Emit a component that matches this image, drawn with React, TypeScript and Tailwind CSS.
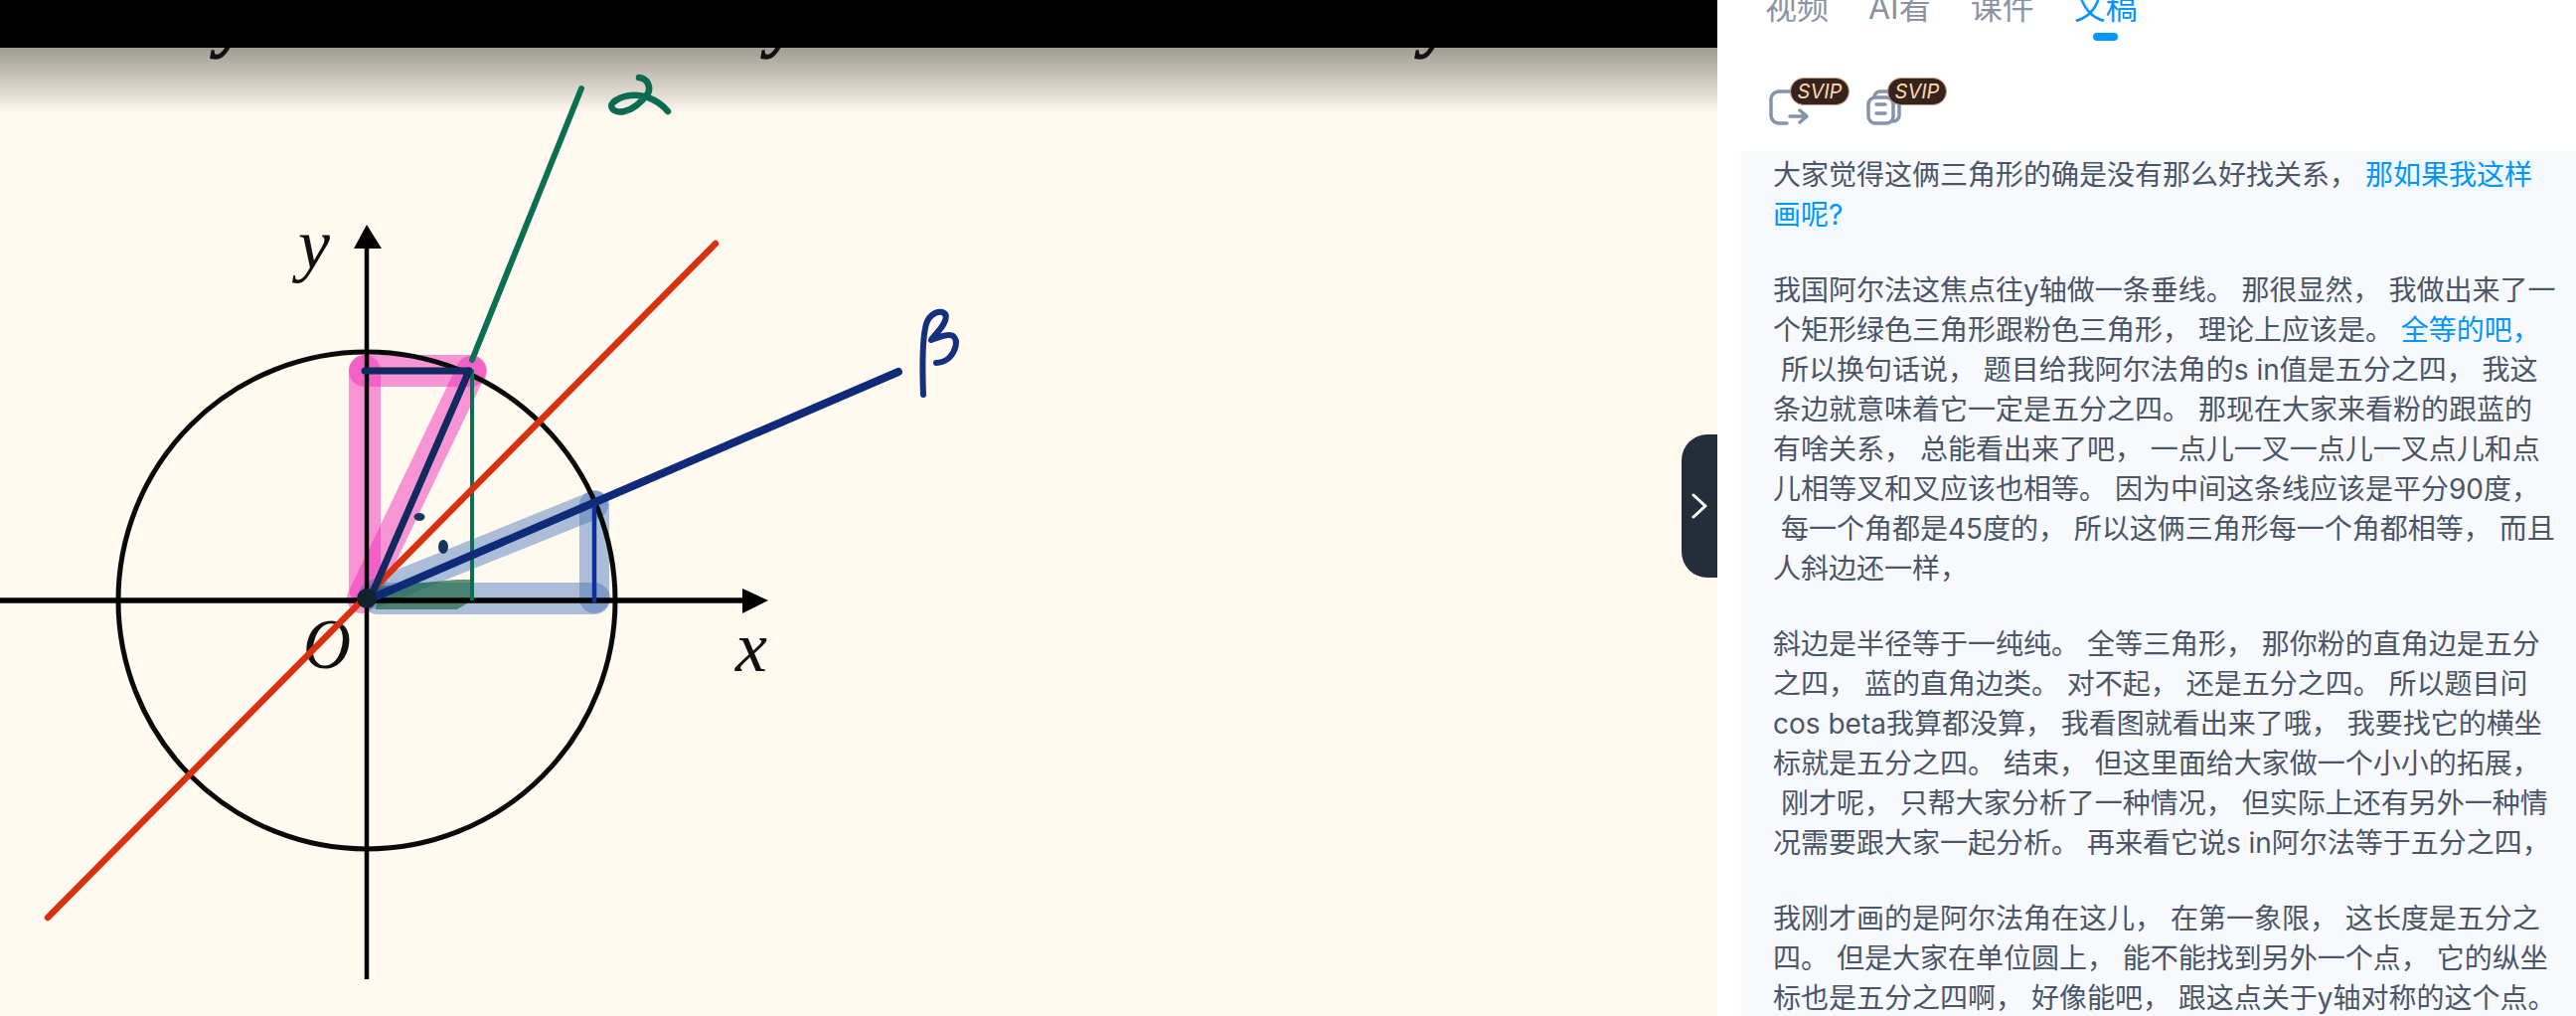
import React from "react";

const font = { fontFamily: 'Inter, "Noto Sans CJK SC", sans-serif' };

function B({ children }: { children: React.ReactNode }) {
  return <span className="bg-[#f2f8ff] text-[#0095ff]">{children}</span>;
}

const paragraphs: React.ReactNode[][] = [
  [
    <>大家觉得这俩三角形的确是没有那么好找关系， <B>那如果我这样</B></>,
    <B>画呢?</B>,
  ],
  [
    "我国阿尔法这焦点往y轴做一条垂线。 那很显然， 我做出来了一",
    <>个矩形绿色三角形跟粉色三角形， 理论上应该是。 <span className="text-[#0095ff]">全等的吧，</span></>,
    " 所以换句话说， 题目给我阿尔法角的s in值是五分之四， 我这",
    "条边就意味着它一定是五分之四。 那现在大家来看粉的跟蓝的",
    "有啥关系， 总能看出来了吧， 一点儿一叉一点儿一叉点儿和点",
    "儿相等叉和叉应该也相等。 因为中间这条线应该是平分90度，",
    " 每一个角都是45度的， 所以这俩三角形每一个角都相等， 而且",
    "人斜边还一样，",
  ],
  [
    "斜边是半径等于一纯纯。 全等三角形， 那你粉的直角边是五分",
    "之四， 蓝的直角边类。 对不起， 还是五分之四。 所以题目问",
    "cos beta我算都没算， 我看图就看出来了哦， 我要找它的横坐",
    "标就是五分之四。 结束， 但这里面给大家做一个小小的拓展，",
    " 刚才呢， 只帮大家分析了一种情况， 但实际上还有另外一种情",
    "况需要跟大家一起分析。 再来看它说s in阿尔法等于五分之四，",
  ],
  [
    "我刚才画的是阿尔法角在这儿， 在第一象限， 这长度是五分之",
    "四。 但是大家在单位圆上， 能不能找到另外一个点， 它的纵坐",
    "标也是五分之四啊， 好像能吧， 跟这点关于y轴对称的这个点。",
  ],
];

function Diagram() {
  const serif = '"Liberation Serif", serif';
  return (
    <svg className="absolute left-0 top-0" width="1728" height="1022" viewBox="0 0 1728 1022">
      <g fontFamily={serif} fontStyle="italic" fontSize="72" fill="#111">
        <g stroke="#111" strokeWidth="1.5">
          <text x="218" y="44">y</text>
          <text x="772" y="44">y</text>
          <text x="1430" y="44">y</text>
        </g>
        <text x="300" y="270">y</text>
        <text x="305" y="672" textLength="48" lengthAdjust="spacingAndGlyphs">O</text>
        <text x="740" y="675">x</text>
      </g>
      {/* pink bands */}
      <g stroke="#ee2fb8" strokeOpacity="0.5" strokeLinecap="round" fill="none">
        <path d="M367 373V592" strokeWidth="32" />
        <path d="M367 373H474" strokeWidth="32" />
        <path d="M474 373L364 602" strokeWidth="30" />
      </g>
      {/* blue bands */}
      <g stroke="#3a6bb4" strokeOpacity="0.42" strokeLinecap="round" fill="none">
        <path d="M598 508L375 598" strokeWidth="28" />
        <path d="M598 508V602" strokeWidth="30" />
        <path d="M380 602H598" strokeWidth="32" />
      </g>
      <path d="M380 590L460 583H475V604L460 613H378Z" fill="#1f6a45" fillOpacity="0.7" />
      <circle cx="369" cy="604" r="250" fill="none" stroke="#0a0a0a" strokeWidth="5" />
      {/* axes */}
      <path d="M0 604H750" stroke="#000" strokeWidth="5.5" />
      <path d="M747 592L773 604L747 617Z" fill="#000" />
      <path d="M369 248V985" stroke="#000" strokeWidth="4.5" />
      <path d="M369 226L384 250H356Z" fill="#000" />
      {/* rays */}
      <path d="M585 89L475 362" stroke="#0b7052" strokeWidth="6" strokeLinecap="round" />
      <path d="M475 372V604" stroke="#0b7052" strokeWidth="4" />
      <path d="M720 245L48 923" stroke="#d8310f" strokeWidth="6.5" strokeLinecap="round" />
      <path d="M904 374L369 604" stroke="#0f2a78" strokeWidth="8" strokeLinecap="round" />
      <path d="M598 508V606" stroke="#0f2e9a" strokeWidth="4.5" />
      <path d="M367 373H472" stroke="#10295e" strokeWidth="7" strokeLinecap="round" />
      <path d="M472 373L375 596" stroke="#10295e" strokeWidth="7" strokeLinecap="round" />
      <circle cx="369" cy="602" r="10" fill="#10222e" />
      <ellipse cx="422" cy="520" rx="5.5" ry="4" fill="#17375f" />
      <ellipse cx="446" cy="550" rx="5" ry="7" fill="#17375f" />
      {/* handwritten greek */}
      <path
        d="M643 78C652 79 655 88 652 94C646 102 638 110 628 112C618 114 612 108 617 103C626 95 642 94 652 98C660 101 668 107 672 112"
        fill="none"
        stroke="#0b6a50"
        strokeWidth="6.5"
        strokeLinecap="round"
        strokeLinejoin="round"
      />
      <path
        d="M929 397C928 370 928 345 931 330C933 318 941 313 948 314C955 316 951 325 946 331C942 336 938 340 937 342C945 339 955 335 959 338C965 343 961 354 955 360C950 364 945 365 942 365"
        fill="none"
        stroke="#14307f"
        strokeWidth="6"
        strokeLinecap="round"
        strokeLinejoin="round"
      />
    </svg>
  );
}

function VipBadge() {
  return (
    <span className="absolute left-[21px] top-[-12px] flex h-[28px] w-[60px] items-center justify-center rounded-full border border-[#c49c7a] bg-[#37231e] text-[20px] font-normal italic leading-none text-[#fbd7ad]">
      SVIP
    </span>
  );
}

export default function App() {
  return (
    <div className="flex h-[1022px] w-[2592px] overflow-hidden bg-white" style={font}>
      <div className="relative flex h-full w-[1728px] flex-col bg-[#fff9f0]">
        <div className="mt-[48px] h-[66px] w-full bg-linear-to-b from-[#9f9c94] to-[#fff9f0]" />
        <Diagram />
        <div className="absolute left-0 top-0 h-12 w-full bg-black" />
        <button className="absolute right-0 top-[437px] flex h-[144px] w-[36px] items-center justify-center rounded-l-[26px] bg-[#252c3a] pr-[1px]">
          <svg width="18" height="28" viewBox="0 0 18 28" fill="none">
            <path d="M3 3L15 14L3 25" stroke="#fff" strokeWidth="3" strokeLinecap="round" strokeLinejoin="round" />
          </svg>
        </button>
      </div>

      <div className="flex h-full w-[864px] flex-col bg-white">
        <div className="h-[152px] shrink-0 pl-[48px]">
          <div className="-mt-3 flex gap-[40px] text-[32px] leading-[40px] text-[#8a93a3]">
            <span>视频</span>
            <span>AI看</span>
            <span>课件</span>
            <span className="flex flex-col items-center text-[#0095ff]">
              文稿
              <span className="mt-[5px] h-2 w-[25px] rounded-full bg-[#0095ff]" />
            </span>
          </div>
          <div className="ml-[4px] mt-[49px] flex gap-[58px]">
            <div className="relative h-[40px] w-[40px]">
              <svg width="40" height="40" viewBox="0 0 40 40" fill="none" stroke="#8592a8" strokeWidth="3.5" strokeLinecap="round" strokeLinejoin="round">
                <path d="M24 2H10A8 8 0 0 0 2 10V26A8 8 0 0 0 10 34H18" />
                <path d="M21 27H37M31 21L38 27L31 33" />
              </svg>
              <VipBadge />
            </div>
            <div className="relative h-[40px] w-[40px]">
              <svg width="40" height="40" viewBox="0 0 40 40" fill="none" stroke="#8592a8" strokeWidth="3.5" strokeLinecap="round" strokeLinejoin="round">
                <rect x="2" y="8" width="25" height="26" rx="7" />
                <path d="M8 7A6 6 0 0 1 14 2H26M33 12V26A6 6 0 0 1 27 32" />
                <path d="M10 15H19M10 24H19" />
              </svg>
              <VipBadge />
            </div>
          </div>
        </div>
        <div className="flex min-h-0 flex-1 pl-6">
          <div className="flex flex-1 flex-col gap-9 overflow-hidden bg-[#f7f9fd] pl-8 pt-1 text-[28px] leading-[40px] text-[#4a5568]">
            {paragraphs.map((lines, i) => (
              <div key={i}>
                {lines.map((line, j) => (
                  <div key={j} className="whitespace-pre">
                    {line}
                  </div>
                ))}
              </div>
            ))}
          </div>
        </div>
      </div>
    </div>
  );
}
